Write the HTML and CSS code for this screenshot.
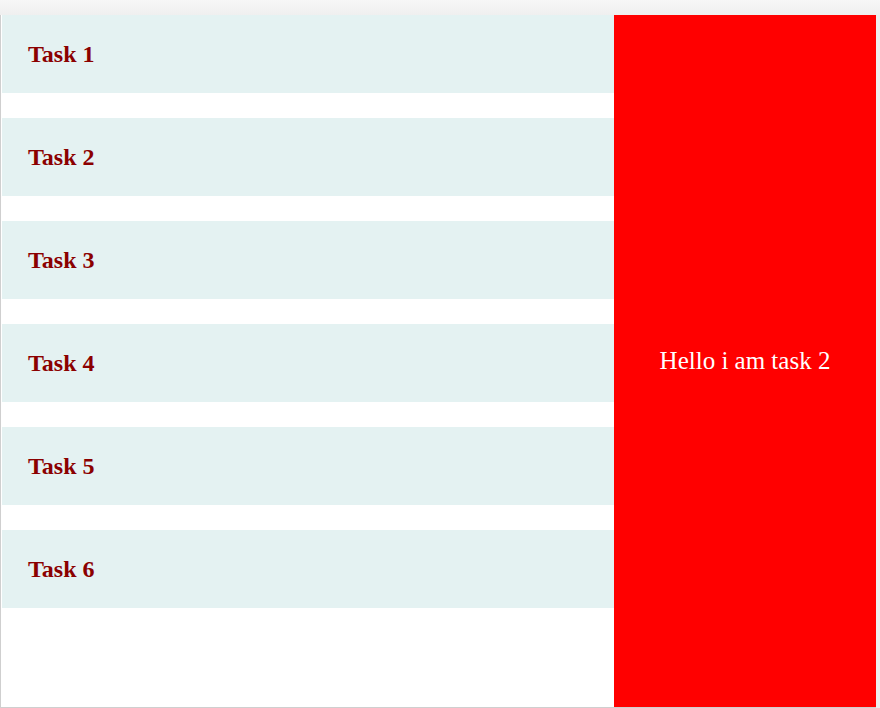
FILE: index.html
```html
<!DOCTYPE html>
<html>
<head>
<meta charset="utf-8">
<link rel="stylesheet" href="styles.css">
</head>
<body>
<div class="topbar"></div>
<div class="frame">
  <div class="app">
    <ul class="tasks">
      <li class="task"><h2>Task 1</h2></li>
      <li class="task"><h2>Task 2</h2></li>
      <li class="task"><h2>Task 3</h2></li>
      <li class="task"><h2>Task 4</h2></li>
      <li class="task"><h2>Task 5</h2></li>
      <li class="task"><h2>Task 6</h2></li>
    </ul>
    <div class="detail">Hello i am task 2</div>
  </div>
  <div class="gutter"></div>
</div>
</body>
</html>
```
FILE: styles.css
```css
html, body {
  margin: 0;
  padding: 0;
  height: 708px;
  overflow: hidden;
  background: #ececec;
  font-family: "Liberation Serif", "Times New Roman", serif;
}
.topbar {
  height: 15px;
  background: linear-gradient(#f7f7f7, #efefef);
}
.frame {
  display: flex;
  height: 693px;
}
.app {
  display: flex;
  width: 875px;
  border-left: 1px solid #cfcfcf;
  border-bottom: 1px solid #cfcfcf;
  background: #fff;
}
.gutter {
  flex: 1;
  background: #eeeeee;
}
.tasks {
  list-style: none;
  margin: 0;
  padding: 0 0 0 1px;
  width: 612px;
  display: flex;
  flex-direction: column;
  gap: 25px;
}
.task {
  height: 78px;
  background: #e4f2f2;
  display: flex;
  align-items: center;
  padding-left: 26px;
}
.task h2 {
  margin: 0;
  font-size: 24px;
  font-weight: bold;
  color: #8b0000;
}
.detail {
  flex: 1;
  background: #ff0000;
  color: #fff;
  font-size: 25px;
  display: flex;
  align-items: center;
  justify-content: center;
}
```
